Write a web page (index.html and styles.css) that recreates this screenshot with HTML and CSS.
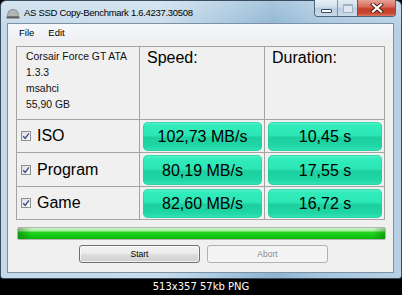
FILE: index.html
```html
<!DOCTYPE html>
<html>
<head>
<meta charset="utf-8">
<link rel="stylesheet" href="styles.css">
</head>
<body>
<div class="window">
  <div class="titlebar">
    <svg class="appicon" width="14" height="11" viewBox="0 0 14 11">
      <path d="M1 9 C1 3 4 1 7 1 C10 1 13 3 13 9 Z" fill="#8d8d8d"/>
      <path d="M2 8 C2 4 4.5 2 7 2 C9.5 2 12 4 12 8 Z" fill="#b5b5b5"/>
      <rect x="0.5" y="8.5" width="13" height="2" rx="0.5" fill="#5e5e5e"/>
    </svg>
    <span class="title">AS SSD Copy-Benchmark 1.6.4237.30508</span>
    <div class="capbtns">
      <div class="cb cb-min"><span class="min-glyph"></span></div>
      <div class="cb cb-max"><span class="max-glyph"></span></div>
      <div class="cb cb-close">
        <svg width="14" height="10" viewBox="0 0 14 10">
          <path d="M3 1.5 L11 8.5 M11 1.5 L3 8.5" stroke="#4a1c14" stroke-width="4" stroke-linecap="square"/>
          <path d="M3 1.5 L11 8.5 M11 1.5 L3 8.5" stroke="#ffffff" stroke-width="2.2" stroke-linecap="square"/>
        </svg>
      </div>
    </div>
  </div>
  <div class="client">
    <div class="menubar"><span>File</span><span>Edit</span></div>
    <div class="content">
      <div class="grid">
        <div class="cell info">
          <div>Corsair Force GT ATA</div>
          <div>1.3.3</div>
          <div>msahci</div>
          <div>55,90 GB</div>
        </div>
        <div class="cell head">Speed:</div>
        <div class="cell head">Duration:</div>

        <div class="cell label"><span class="check"><svg width="8" height="8" viewBox="0 0 8 8"><path d="M1.2 4.2 L3.2 6.3 L6.9 1.3" fill="none" stroke="#3d4f8c" stroke-width="1.4"/></svg></span>ISO</div>
        <div class="cell val"><div class="pill">102,73 MB/s</div></div>
        <div class="cell val"><div class="pill">10,45 s</div></div>

        <div class="cell label"><span class="check"><svg width="8" height="8" viewBox="0 0 8 8"><path d="M1.2 4.2 L3.2 6.3 L6.9 1.3" fill="none" stroke="#3d4f8c" stroke-width="1.4"/></svg></span>Program</div>
        <div class="cell val"><div class="pill">80,19 MB/s</div></div>
        <div class="cell val"><div class="pill">17,55 s</div></div>

        <div class="cell label"><span class="check"><svg width="8" height="8" viewBox="0 0 8 8"><path d="M1.2 4.2 L3.2 6.3 L6.9 1.3" fill="none" stroke="#3d4f8c" stroke-width="1.4"/></svg></span>Game</div>
        <div class="cell val"><div class="pill">82,60 MB/s</div></div>
        <div class="cell val"><div class="pill">16,72 s</div></div>
      </div>
      <div class="progress"></div>
      <div class="buttons">
        <div class="btn">Start</div>
        <div class="btn disabled">Abort</div>
      </div>
    </div>
  </div>
</div>
<div class="caption">513x357 57kb PNG</div>
</body>
</html>
```
FILE: styles.css
```css
html, body {
  margin: 0;
  padding: 0;
}
body {
  width: 402px;
  height: 295px;
  background: #000;
  overflow: hidden;
  font-family: "Liberation Sans", Arial, sans-serif;
}
.window {
  box-sizing: border-box;
  width: 402px;
  height: 279px;
  display: flex;
  flex-direction: column;
  border: 1px solid #3b4e60;
  border-radius: 6px 6px 3px 3px;
  background:
    linear-gradient(to bottom, rgba(255,255,255,0.25), rgba(255,255,255,0) 30px),
    linear-gradient(to right, #c4d9ea 0%, #c8dcec 40%, #a9c8df 55%, #8db4d2 68%, #a6c5de 80%, #b7d0e5 100%);
}
.titlebar {
  height: 22px;
  display: flex;
  align-items: flex-start;
  padding-left: 5px;
}
.appicon {
  margin-top: 7px;
  flex: none;
}
.title {
  margin-left: 4px;
  margin-top: 6px;
  font-size: 9.5px;
  letter-spacing: -0.3px;
  line-height: 11px;
  color: #000;
  white-space: nowrap;
  flex: 1;
}
.capbtns {
  display: flex;
  margin-top: -1px;
  margin-right: 5px;
  height: 17px;
  border: 1px solid #4d6479;
  border-top: none;
  border-radius: 0 0 4px 4px;
  overflow: hidden;
  box-sizing: border-box;
}
.cb {
  height: 16px;
  display: flex;
  align-items: center;
  justify-content: center;
  box-sizing: border-box;
}
.cb-min {
  width: 23px;
  border-right: 1px solid #7c93a8;
  background: linear-gradient(to bottom, #e6eef5 0%, #d2e0ec 45%, #b9cde0 50%, #c9dbea 100%);
  align-items: flex-end;
  padding-bottom: 3px;
}
.min-glyph {
  width: 9px;
  height: 2px;
  background: #fff;
  border: 1px solid #37495a;
  border-radius: 1px;
}
.cb-max {
  width: 20px;
  border-right: 1px solid #7c4e46;
  background: linear-gradient(to bottom, #e2ebf3 0%, #d0deea 45%, #bccfe0 50%, #cbdcea 100%);
}
.max-glyph {
  width: 8px;
  height: 6px;
  border: 1px solid #9fb2c3;
  border-top-width: 2px;
  background: #dfe8f0;
}
.cb-close {
  width: 37px;
  background: linear-gradient(to bottom, #e6a295 0%, #d9705f 40%, #c3402b 55%, #c94a35 85%, #dd7a62 100%);
}
.client {
  flex: 1;
  margin: 0 7px 5px 6px;
  border: 1px solid #7d91a5;
  background: #f0f0f0;
  display: flex;
  flex-direction: column;
}
.menubar {
  height: 16px;
  display: flex;
  align-items: center;
  padding-left: 11px;
  gap: 14px;
  font-size: 9.5px;
  color: #000;
  background: linear-gradient(to bottom, #f6f8fb, #eef0f3);
}
.content {
  padding: 6px 8px 9px 8px;
  display: flex;
  flex-direction: column;
}
.grid {
  display: grid;
  grid-template-columns: 122px 124px 119px;
  grid-template-rows: 72px 32px 33px 32px;
  gap: 1px;
  background: #a4a4a4;
  border: 1px solid #a4a4a4;
  width: 367px;
}
.cell {
  background: #f0f0f0;
  min-width: 0;
}
.info {
  padding: 2px 0 0 9px;
  font-size: 10.4px;
  line-height: 16px;
  color: #111;
}
.head {
  padding: 1px 0 0 7px;
  font-size: 16px;
  line-height: 19px;
  color: #000;
}
.label {
  display: flex;
  align-items: center;
  padding-left: 4px;
  font-size: 16px;
  color: #000;
}
.check {
  box-sizing: border-box;
  width: 10px;
  height: 10px;
  border: 1px solid #8e8f8f;
  background: linear-gradient(135deg, #dedede, #fbfbfb);
  margin-right: 6px;
  display: flex;
  align-items: center;
  justify-content: center;
}
.val {
  display: flex;
  padding: 2px 2px 1px 3px;
}
.pill {
  flex: 1;
  display: flex;
  align-items: center;
  justify-content: center;
  padding-top: 1px;
  border-radius: 5px;
  font-size: 16px;
  color: #000;
  background: linear-gradient(to bottom, #5cf4cf 0%, #33ecbc 12%, #2ce6b6 46%, #1dcf9e 54%, #1fd6a5 82%, #34e5b8 100%);
  box-shadow: inset 0 0 0 1px rgba(40, 200, 150, 0.6);
}
.progress {
  box-sizing: border-box;
  margin-top: 7px;
  margin-left: 1px;
  width: 369px;
  height: 13px;
  border: 1px solid #b3b3b3;
  border-radius: 2px;
  background:
    linear-gradient(to right, rgba(0,70,0,0.35) 0px, rgba(0,70,0,0) 14px, rgba(0,70,0,0) calc(100% - 12px), rgba(0,70,0,0.3) 100%),
    linear-gradient(to bottom, #cdf7c6 0%, #a6f09c 25%, #25d424 40%, #12cb12 70%, #0db50d 100%);
}
.buttons {
  margin-top: 5px;
  display: flex;
  gap: 7px;
  padding-left: 63px;
}
.btn {
  box-sizing: border-box;
  width: 121px;
  height: 18px;
  border: 1px solid #707070;
  border-radius: 3px;
  display: flex;
  align-items: center;
  justify-content: center;
  font-size: 8.5px;
  color: #000;
  background: linear-gradient(to bottom, #f2f2f2 0%, #ebebeb 48%, #dddddd 52%, #cfcfcf 100%);
  box-shadow: inset 0 0 0 1px rgba(255,255,255,0.7);
}
.btn.disabled {
  border-color: #adb2b5;
  background: #f4f4f4;
  color: #8a8a8a;
  box-shadow: none;
}
.caption {
  height: 16px;
  line-height: 16px;
  text-align: center;
  color: #fff;
  font-family: "DejaVu Sans", Verdana, sans-serif;
  font-size: 10px;
}
```
